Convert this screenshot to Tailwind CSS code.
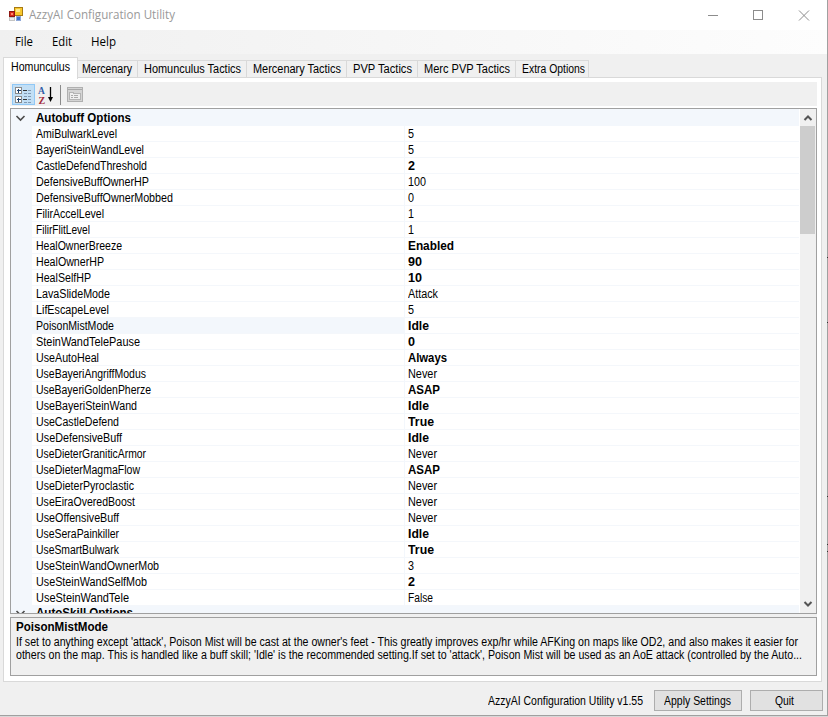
<!DOCTYPE html>
<html lang="en">
<head>
<meta charset="utf-8">
<title>AzzyAI Configuration Utility</title>
<script src="https://cdn.jsdelivr.net/npm/@tailwindcss/browser@4"></script>
</head>
<body class="w-[828px] h-[717px] overflow-hidden bg-[#d8d8d8] text-[12px] text-black font-['Liberation_Sans',Arial,sans-serif]">
<div class="relative w-[828px] h-[716px] flex flex-col bg-[#f0f0f0] border-r border-b border-[#a0a0a0]">
  <header class="h-[30px] shrink-0 bg-white flex items-center pl-[9px] font-['Open_Sans','Noto_Sans',sans-serif]">
    <svg class="w-[14px] h-[14px] -mt-[2px]" viewBox="0 0 14 14" shape-rendering="crispEdges">
      <rect x="5.500" y=".5" width="8" height="8" fill="#f8c82e" stroke="#a87a12"/><rect x="7" y="2" width="4" height="3" fill="#ffe98a"/>
      <rect x=".5" y="4.500" width="5" height="5" fill="#d8281c" stroke="#8e1712"/><rect x="2" y="6" width="2" height="2" fill="#ff8868"/>
      <rect x="7.500" y="9.500" width="4" height="4" fill="#3f72cc" stroke="#8fa8d8"/>
      <path d="M.5 10.500h5v3h-5z" fill="#ececec" stroke="#c4c4c4"/>
    </svg>
    <span data-w="146" class="ml-[6px] inline-block origin-left whitespace-nowrap text-[#999]">AzzyAI Configuration Utility</span>
    <svg class="ml-auto mr-[17px] w-[102px] h-[11px]" viewBox="0 0 102 11" fill="none" stroke="#8c8c8c">
      <path d="M0 5.500H10M45.500 .5h9v9h-9z" shape-rendering="crispEdges"/><path d="M91 .5l10 10M101 .5l-10 10"/>
    </svg>
  </header>
  <nav class="h-[24px] shrink-0 flex items-center pl-[15px] bg-linear-to-r from-[#f0f0f0] to-[#fdfdfd] font-['Open_Sans','Noto_Sans',sans-serif]">
    <div class="w-[37px]"><span data-w="18" class="inline-block origin-left">File</span></div>
    <div class="w-[39px]"><span data-w="20" class="inline-block origin-left">Edit</span></div>
    <div><span data-w="25" class="inline-block origin-left">Help</span></div>
  </nav>
  <div class="h-[24px] shrink-0 pl-[3px] pt-[3px] flex items-end">
    <div class="relative z-10 -mb-px w-[75px] h-[22px] bg-white border border-b-0 border-[#d9d9d9] pl-[7px] leading-[19px]"><span data-w="59" class="inline-block origin-left">Homunculus</span></div>
    <div class="flex h-[18px] leading-[17px] whitespace-nowrap *:border-t *:border-r *:border-[#d9d9d9] *:h-[18px]">
      <div class="w-[60px] pl-[4px]"><span data-w="50" class="inline-block origin-left">Mercenary</span></div>
      <div class="w-[109px] pl-[6px]"><span data-w="97" class="inline-block origin-left">Homunculus Tactics</span></div>
      <div class="w-[100px] pl-[6px]"><span data-w="88" class="inline-block origin-left">Mercenary Tactics</span></div>
      <div class="w-[71px] pl-[6px]"><span data-w="59" class="inline-block origin-left">PVP Tactics</span></div>
      <div class="w-[98px] pl-[6px]"><span data-w="86" class="inline-block origin-left">Merc PVP Tactics</span></div>
      <div class="w-[73px] pl-[6px]"><span data-w="63" class="inline-block origin-left">Extra Options</span></div>
    </div>
  </div>
  <main class="ml-[3px] w-[819px] h-[605px] -mt-px shrink-0 bg-white border border-[#d9d9d9] pt-[4px] pl-[6px]">
    <div class="w-[807px] h-[24px] bg-[#f0f0f0] flex items-center">
      <svg class="w-[80px] h-[24px]" viewBox="0 0 80 24" fill="none">
        <g shape-rendering="crispEdges">
          <rect x="2.500" y="2.500" width="22" height="20" fill="#c2dff5" stroke="#90c8f6"/>
          <rect x="5.500" y="5.500" width="6" height="6" rx="1" fill="#fff" stroke="#8a8a8a"/><rect x="5.500" y="14.500" width="6" height="6" rx="1" fill="#fff" stroke="#8a8a8a"/>
          <path d="M7 8.500h4M8.500 7v4M7 17.500h4M8.500 16v4" stroke="#173c68"/>
          <path d="M13 8.500h4M13 17.500h4" stroke="#333"/>
          <path d="M14 11.500h3M18 8.500h3M18 11.500h3M18 14.500h3M14 14.500h3M14 20.500h3M18 17.500h3M18 20.500h3" stroke="#8199b2"/>
          <path d="M50.500 3v20" stroke="#8b8b8b"/>
          <rect x="57.500" y="5.500" width="15" height="14" fill="#d4d4d4" stroke="#b0b0b0"/><path d="M58 7.500h14" stroke="#a8a8a8"/>
          <path d="M59.500 10.500h4v1h7v6h-11z" fill="#eee" stroke="#b4b4b4"/><path d="M61 13.500h2M64 13.500h4M61 15.500h2M64 15.500h4" stroke="#aaa"/>
        </g>
        <path d="M40.500 5v12" stroke="#000" stroke-width="1.300"/><path d="M38 15h5l-2.500 5z" fill="#000"/>
        <text x="28" y="12" font-size="9.500" font-weight="bold" font-family="Liberation Serif" fill="#315da8">A</text>
        <text x="28.500" y="21.500" font-size="10" font-weight="bold" font-family="Liberation Serif" fill="#a32b3b">Z</text>
      </svg>
    </div>
    <section class="mt-[2px] w-[807px] h-[506px] border border-[#a0a0a0] flex overflow-hidden">
      <div class="w-[788px] h-[504px] overflow-hidden shrink-0">
        <div class="h-[17px] bg-[#f3f7fc] flex items-center">
          <svg class="w-[25px] h-[10px]" viewBox="0 0 25 10" fill="none" stroke="#4b4b4b" stroke-width="1.600"><path d="M5.500 3l4 4 4-4"/></svg>
          <span data-w="95" class="inline-block origin-left whitespace-nowrap font-bold leading-[17px] pt-px">Autobuff Options</span>
        </div>
        <div id="rows"></div>
        <div class="h-[17px] bg-[#f3f7fc] flex items-start">
          <svg class="mt-[2px] w-[25px] h-[10px]" viewBox="0 0 25 10" fill="none" stroke="#4b4b4b" stroke-width="1.600"><path d="M5.500 3l4 4 4-4"/></svg>
          <span data-w="97" class="inline-block origin-left whitespace-nowrap font-bold leading-[15px]">AutoSkill Options</span>
        </div>
      </div>
      <div class="ml-px w-[16px] bg-[#f0f0f0] flex flex-col items-start">
        <svg class="w-[16px] h-[17px]" viewBox="0 0 16 17" fill="none" stroke="#555" stroke-width="2"><path d="M4.500 11l3.500-3.500 3.500 3.500"/></svg>
        <div class="w-[15px] h-[108px] bg-[#cdcdcd]"></div>
        <svg class="mt-auto w-[16px] h-[17px]" viewBox="0 0 16 17" fill="none" stroke="#555" stroke-width="2"><path d="M4.500 6l3.500 3.500 3.500-3.500"/></svg>
      </div>
    </section>
    <div class="h-[3px] w-[807px] bg-[#f0f0f0]"></div>
    <section class="w-[807px] h-[59px] border border-[#a0a0a0] bg-[#f0f0f0] pl-[5px] pt-[3px] leading-[13px] whitespace-nowrap">
      <div class="h-[15px] font-bold"><span data-w="92" class="inline-block origin-left">PoisonMistMode</span></div>
      <div class="h-[13px]"><span data-w="782" class="inline-block origin-left">If set to anything except 'attack', Poison Mist will be cast at the owner's feet - This greatly improves exp/hr while AFKing on maps like OD2, and also makes it easier for</span></div>
      <div class="h-[13px]"><span data-w="786" class="inline-block origin-left">others on the map. This is handled like a buff skill; 'Idle' is the recommended setting.If set to 'attack', Poison Mist will be used as an AoE attack (controlled by the Auto...</span></div>
    </section>
  </main>
  <footer class="h-[33px] flex pt-[8px] pl-[488px] leading-[21px] whitespace-nowrap">
    <div class="w-[166px]"><span data-w="155" class="inline-block origin-left pt-px">AzzyAI Configuration Utility v1.55</span></div>
    <button class="w-[88px] h-[21px] bg-[#e1e1e1] border border-[#adadad] leading-[20px] text-left pl-[9px]"><span data-w="67" class="inline-block origin-left">Apply Settings</span></button>
    <button class="ml-[8px] w-[73px] h-[21px] bg-[#e1e1e1] border border-[#adadad] leading-[20px] text-left pl-[24px]"><span data-w="19" class="inline-block origin-left">Quit</span></button>
  </footer>
  <div class="absolute left-[827px] top-[257px] w-px h-px bg-[#333]"></div>
  <div class="absolute left-[827px] top-[322px] w-px h-px bg-[#333]"></div>
  <div class="absolute left-[827px] top-[496px] w-px h-px bg-[#333]"></div>
  <div class="absolute left-[827px] top-[544px] w-px h-px bg-[#333]"></div>
  <div class="absolute left-[827px] top-[551px] w-px h-px bg-[#333]"></div>
</div>
<script>
// name, name width, value, value width, changed from default
const rows = [
 ["AmiBulwarkLevel",81,"5",6,0],["BayeriSteinWandLevel",108,"5",6,0],["CastleDefendThreshold",111,"2",7,1],
 ["DefensiveBuffOwnerHP",113,"100",18,0],["DefensiveBuffOwnerMobbed",137,"0",6,0],["FilirAccelLevel",68,"1",6,0],
 ["FilirFlitLevel",54,"1",6,0],["HealOwnerBreeze",86,"Enabled",46,1],["HealOwnerHP",68,"90",14,1],
 ["HealSelfHP",55,"10",14,1],["LavaSlideMode",74,"Attack",30,0],["LifEscapeLevel",73,"5",6,0],
 ["PoisonMistMode",78,"Idle",21,1],["SteinWandTelePause",104,"0",7,1],["UseAutoHeal",63,"Always",39,1],
 ["UseBayeriAngriffModus",110,"Never",29,0],["UseBayeriGoldenPherze",115,"ASAP",32,1],["UseBayeriSteinWand",101,"Idle",21,1],
 ["UseCastleDefend",83,"True",26,1],["UseDefensiveBuff",86,"Idle",21,1],["UseDieterGraniticArmor",110,"Never",29,0],
 ["UseDieterMagmaFlow",104,"ASAP",32,1],["UseDieterPyroclastic",98,"Never",29,0],["UseEiraOveredBoost",99,"Never",29,0],
 ["UseOffensiveBuff",83,"Never",29,0],["UseSeraPainkiller",83,"Idle",21,1],["UseSmartBulwark",83,"True",26,1],
 ["UseSteinWandOwnerMob",123,"3",6,0],["UseSteinWandSelfMob",111,"2",7,1],["UseSteinWandTele",93,"False",25,0]];
document.getElementById("rows").innerHTML = rows.map(([n,nw,v,vw,b]) => `
 <div class="h-[16px] flex leading-[16px] whitespace-nowrap bg-[#f3f7fc] pl-[21px]">
  <div class="w-[372px] pl-[4px] border-b border-[#f4f7fb] ${n === "PoisonMistMode" ? "" : "bg-white"}"><span data-w="${nw}" class="inline-block origin-left">${n}</span></div>
  <div class="ml-px w-[394px] pl-[3px] bg-white border-b border-[#f4f7fb] ${b ? "font-bold" : ""}"><span data-w="${vw}" class="inline-block origin-left">${v}</span></div>
 </div>`).join("");
// condense each label to its own width, again whenever its natural width changes
function fit(s) {
  const natural = parseFloat(getComputedStyle(s).width) || s.offsetWidth;
  s.style.transform = `scaleX(${s.dataset.w / natural})`;
  s.style.marginRight = (s.dataset.w - natural) + "px";
}
const watcher = new ResizeObserver(list => list.forEach(e => fit(e.target)));
document.querySelectorAll("[data-w]").forEach(s => { fit(s); watcher.observe(s); });
addEventListener("load", () => document.querySelectorAll("[data-w]").forEach(fit));
</script>
</body>
</html>
